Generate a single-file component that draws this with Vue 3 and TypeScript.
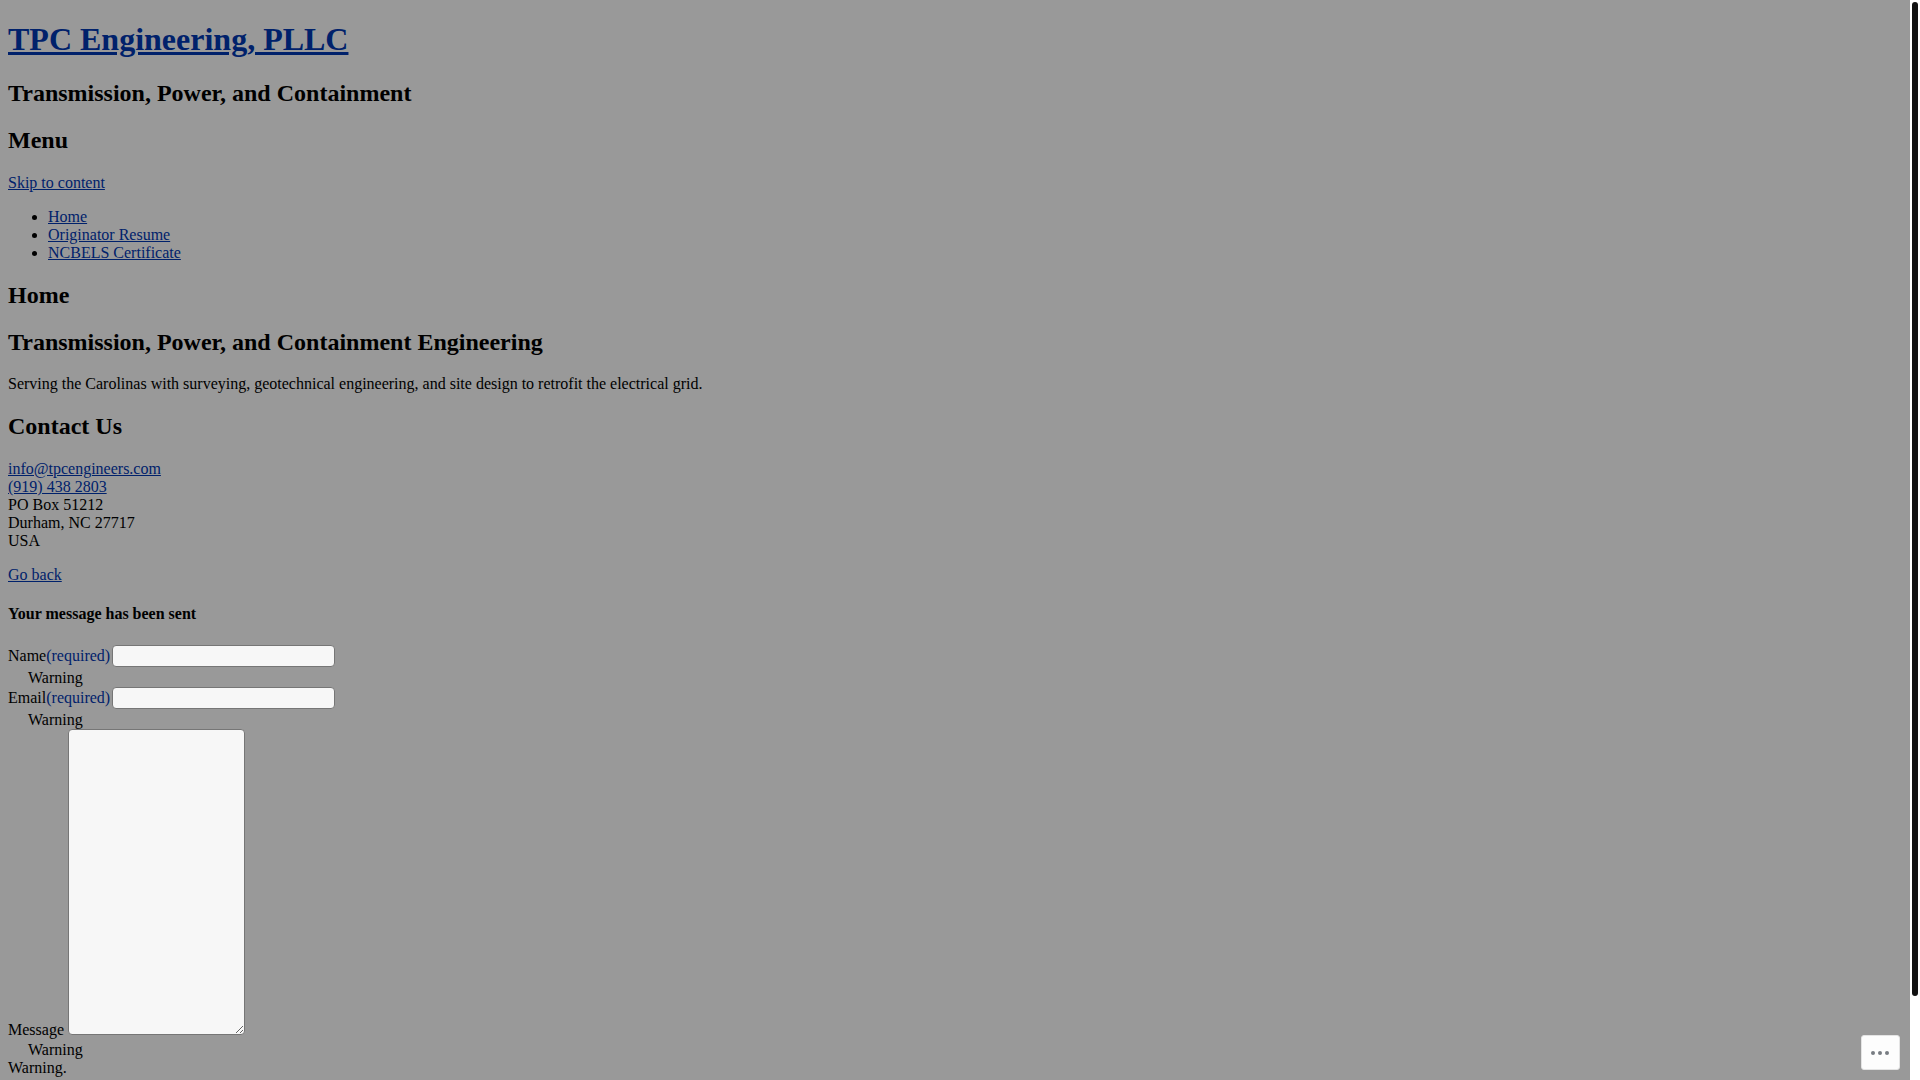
<script setup lang="ts">
import { reactive } from 'vue'

interface Field {
  id: 'name' | 'email'
  label: string
  type: string
}

const navigation: string[] = ['Home', 'Originator Resume', 'NCBELS Certificate']
const fields: Field[] = [
  { id: 'name', label: 'Name', type: 'text' },
  { id: 'email', label: 'Email', type: 'email' },
]
const form = reactive({ name: '', email: '', message: '' })
</script>

<template>
  <div class="shell">
    <div class="page">
      <header>
        <h1><a href="#">TPC Engineering, PLLC</a></h1>
        <h2>Transmission, Power, and Containment</h2>
        <nav>
          <h2>Menu</h2>
          <a href="#content">Skip to content</a>
          <ul>
            <li v-for="item in navigation" :key="item"><a href="#">{{ item }}</a></li>
          </ul>
        </nav>
      </header>
      <main id="content">
        <h2>Home</h2>
        <section class="intro">
          <h2>Transmission, Power, and Containment Engineering</h2>
          <p>Serving the Carolinas with surveying, geotechnical engineering, and site design to retrofit the electrical grid.</p>
        </section>
        <h2>Contact Us</h2>
        <p>
          <a href="mailto:info@tpcengineers.com">info@tpcengineers.com</a><br>
          <a href="tel:9194382803">(919) 438 2803</a><br>
          PO Box 51212<br>
          Durham, NC 27717<br>
          USA
        </p>
        <p><a href="#">Go back</a></p>
        <h4>Your message has been sent</h4>
        <form @submit.prevent>
          <div v-for="field in fields" :key="field.id">
            <div class="field">
              <label :for="field.id">{{ field.label }}<span class="required">(required)</span></label>
              <input :id="field.id" v-model="form[field.id]" :type="field.type" required>
            </div>
            <div class="warning">Warning</div>
          </div>
          <div class="message">
            <label for="message">Message</label>
            {{ ' ' }}<textarea id="message" v-model="form.message"></textarea>
          </div>
          <div class="warning">Warning</div>
          <div>Warning.</div>
        </form>
      </main>
    </div>
    <div class="track"><div class="thumb"></div></div>
    <button class="more" type="button" aria-label="More options">
      <svg width="18" height="4" viewBox="0 0 18 4" fill="#787c82" aria-hidden="true">
        <circle cx="2" cy="2" r="2" />
        <circle cx="9" cy="2" r="2" />
        <circle cx="16" cy="2" r="2" />
      </svg>
    </button>
  </div>
</template>

<style>
body {
  margin: 0;
  background: #999;
}
</style>

<style scoped>
.shell {
  display: flex;
  min-height: 100vh;
  background: #999;
  color: #000;
  font-family: "Liberation Serif", "Times New Roman", serif;
  font-size: 16px;
}

.page {
  flex: 1;
  min-width: 0;
  padding: 0 8px;
}

h1 {
  margin: 21px 0 22px;
  font-size: 32px;
}

h2 {
  margin: 20px 0;
  font-size: 24px;
}

.intro h2 {
  margin-bottom: 19px;
}

h4 {
  margin: 21px 0 22px;
}

a,
.required {
  color: #00216b;
}

.field {
  display: flex;
  gap: 2px;
  height: 22px;
}

.field label {
  padding-top: 2px;
}

input,
textarea {
  box-sizing: border-box;
  margin: 0;
  border: 1px solid #767676;
  border-radius: 4px;
  background: #f7f7f7;
}

input {
  width: 223px;
  height: 22px;
}

textarea {
  width: 177px;
  height: 306px;
}

.warning {
  padding: 2px 0 0 20px;
}

.track {
  flex: none;
  box-sizing: border-box;
  width: 10px;
  height: 100vh;
  padding: 2px;
  background: #fff;
}

.thumb {
  height: 92.4%;
  border-radius: 3px;
  background: #111;
}

.more {
  position: fixed;
  right: 20px;
  bottom: 10px;
  display: flex;
  align-items: center;
  justify-content: center;
  width: 39px;
  height: 35px;
  padding: 0 1px 0 0;
  border: 1px solid #e4e4e4;
  border-radius: 3px;
  background: #fdfdfd;
}
</style>
